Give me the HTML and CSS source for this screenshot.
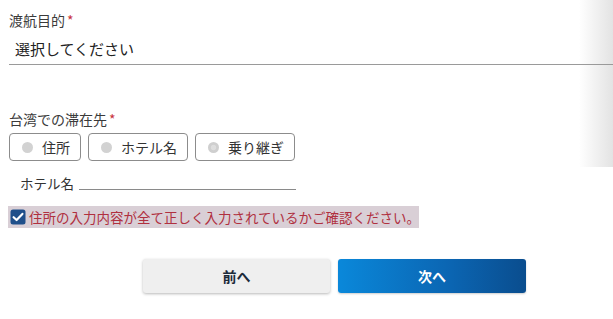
FILE: index.html
```html
<!DOCTYPE html>
<html lang="ja">
<head>
<meta charset="utf-8">
<link rel="stylesheet" href="styles.css">
</head>
<body>
<div class="page">
  <div class="label">渡航目的<span class="req">*</span></div>
  <div class="select">選択してください</div>

  <div class="label label-stay">台湾での滞在先<span class="req">*</span></div>
  <div class="radios">
    <div class="radio"><span class="dot"></span>住所</div>
    <div class="radio"><span class="dot"></span>ホテル名</div>
    <div class="radio"><span class="dot dot-alt"></span>乗り継ぎ</div>
  </div>

  <div class="hotel-row">
    <span class="hotel-label">ホテル名</span>
    <span class="hotel-line"></span>
  </div>

  <div class="confirm">
    <svg class="check" width="16" height="16" viewBox="0 0 16 16">
      <rect x="0.5" y="0.5" width="15" height="15" rx="2.5" fill="#1f4f8a"/>
      <path d="M3.6 8.2 L6.6 11 L12.4 4.9" fill="none" stroke="#fff" stroke-width="2.2" stroke-linecap="round" stroke-linejoin="round"/>
    </svg>
    <span class="confirm-text">住所の入力内容が全て正しく入力されているかご確認ください。</span>
  </div>

  <div class="actions">
    <button class="btn btn-prev">前へ</button>
    <button class="btn btn-next">次へ</button>
  </div>
</div>
</body>
</html>
```

FILE: styles.css
```css
html, body {
  margin: 0;
  padding: 0;
  background: #fff;
}
body {
  font-family: "Noto Sans CJK JP", "Noto Sans", sans-serif;
  color: #333;
  width: 613px;
  height: 319px;
  overflow: hidden;
}
.page {
  padding-top: 10px;
  background: linear-gradient(to right, rgba(255,255,255,0), #e3e3e3) right top / 34px 167px no-repeat;
  height: 309px;
}
.label {
  margin-left: 9px;
  font-size: 14px;
  line-height: 20px;
  color: #3a3a3a;
}
.req {
  color: #c8323c;
  margin-left: 2px;
}
.select {
  margin-left: 9px;
  padding: 8px 0 4px 6px;
  font-size: 15px;
  line-height: 22px;
  color: #222;
  border-bottom: 1px solid #9a9a9a;
}
.label-stay {
  margin-top: 44px;
}
.radios {
  display: flex;
  gap: 7px;
  margin: 4px 0 0 9px;
}
.radio {
  display: flex;
  align-items: center;
  height: 26px;
  padding: 0 10px 0 12px;
  border: 1px solid #8c8c8c;
  border-radius: 4px;
  font-size: 14px;
  color: #333;
}
.dot {
  width: 11px;
  height: 11px;
  border-radius: 50%;
  background: #d2d2d2;
  margin-right: 9px;
}
.dot-alt {
  background: radial-gradient(circle, #dedede 0 30%, #cfcfcf 40%);
}
.hotel-row {
  display: flex;
  align-items: flex-end;
  margin: 12px 0 0 20px;
  height: 20px;
}
.hotel-label {
  font-size: 13.5px;
  line-height: 20px;
  color: #333;
  margin-right: 5px;
}
.hotel-line {
  width: 217px;
  height: 1px;
  background: #8a8a8a;
  margin-bottom: 3px;
}
.confirm {
  display: flex;
  align-items: center;
  width: 411px;
  height: 22px;
  margin: 13px 0 0 8px;
  background: #d9cfd6;
}
.check {
  margin: 0 3px 0 2px;
  flex: none;
}
.confirm-text {
  font-size: 13.5px;
  line-height: 22px;
  color: #b0303f;
  white-space: nowrap;
}
.actions {
  display: flex;
  gap: 8px;
  margin: 31px 0 0 143px;
}
.btn {
  height: 34px;
  border: none;
  border-radius: 3px;
  font-family: "Noto Sans CJK JP", sans-serif;
  font-weight: bold;
  font-size: 14px;
  padding: 0;
}
.btn-prev {
  width: 187px;
  background: #efefef;
  color: #1c2a3a;
  box-shadow: 0 1px 3px rgba(0,0,0,0.28);
}
.btn-next {
  width: 188px;
  background: linear-gradient(to right, #0a88da, #0b65b2 60%, #0a4d8e);
  color: #fff;
  box-shadow: 0 1px 2px rgba(0,0,0,0.2);
}
```
